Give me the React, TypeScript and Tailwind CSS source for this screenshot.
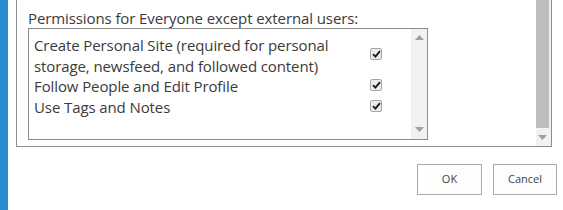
import React from 'react'

const permissions = [
  { lines: ['Create Personal Site (required for personal', 'storage, newsfeed, and followed content)'], checked: true },
  { lines: ['Follow People and Edit Profile'], checked: true },
  { lines: ['Use Tags and Notes'], checked: true },
]

function CheckBox() {
  return (
    <div className="w-[12px] h-[12px] rounded-[2px] border border-[#a6a6a6] bg-[#ececec] flex items-center justify-center">
      <svg width="9" height="8" viewBox="0 0 9 8">
        <path d="M1 4.2 L3.4 6.6 L8 1.2" fill="none" stroke="#1a1a1a" strokeWidth="1.9" />
      </svg>
    </div>
  )
}

function Arrow({ up }: { up?: boolean }) {
  return (
    <svg width="9" height="5" viewBox="0 0 9 5">
      <path d={up ? 'M0 5 L4.5 0 L9 5 Z' : 'M0 0 L4.5 5 L9 0 Z'} fill="#a0a0a0" />
    </svg>
  )
}

export default function App() {
  return (
    <div
      className="w-[563px] h-[210px] bg-white flex overflow-hidden text-[#333]"
      style={{ fontFamily: '"Open Sans", "Noto Sans", sans-serif' }}
    >
      <div className="w-[8px] h-full bg-[#2b8cd3] shrink-0" />
      <div className="flex flex-col">
        {/* outer panel */}
        <div className="ml-[8px] w-[536px] h-[147px] border-l border-r border-b border-[#8c8c8c] flex">
          <div className="flex-1 pl-[11px] pt-[9px]">
            <div className="text-[15px] leading-[18px] text-[#3a3a3a] tracking-[-0.1px]">
              Permissions for Everyone except external users:
            </div>
            <div className="mt-[1px] w-[400px] h-[112px] border border-[#8c8c8c] flex">
              <div className="flex-1 pl-[5px] pt-[6px]">
                {permissions.map((p, i) => (
                  <div key={i} className="flex items-center">
                    <div className="w-[336px] text-[15px] leading-[20.7px] text-[#3a3a3a] whitespace-nowrap tracking-[-0.1px]">
                      {p.lines.map((l, j) => (
                        <div key={j}>{l}</div>
                      ))}
                    </div>
                    <div className="-mt-[3px]">{p.checked && <CheckBox />}</div>
                  </div>
                ))}
              </div>
              <div className="w-[16px] bg-[#f1f1f1] flex flex-col items-center justify-between pt-[6px] pb-[7px]">
                <Arrow up />
                <Arrow />
              </div>
            </div>
          </div>
          <div className="w-[15px] bg-[#f1f1f1] flex flex-col">
            <div className="w-[13px] h-[128px] bg-[#bdbdbd]" />
            <div className="flex-1 flex items-center justify-center pr-[2px]">
              <Arrow />
            </div>
          </div>
        </div>
        {/* buttons */}
        <div className="flex justify-end gap-[11px] mt-[17px] mr-[-5px]">
          <button className="w-[65px] h-[31px] border border-[#ababab] bg-[#fdfdfd] text-[11px] text-[#444]">
            OK
          </button>
          <button className="w-[64px] h-[31px] border border-[#ababab] bg-[#fdfdfd] text-[11px] text-[#444]">
            Cancel
          </button>
        </div>
      </div>
    </div>
  )
}
